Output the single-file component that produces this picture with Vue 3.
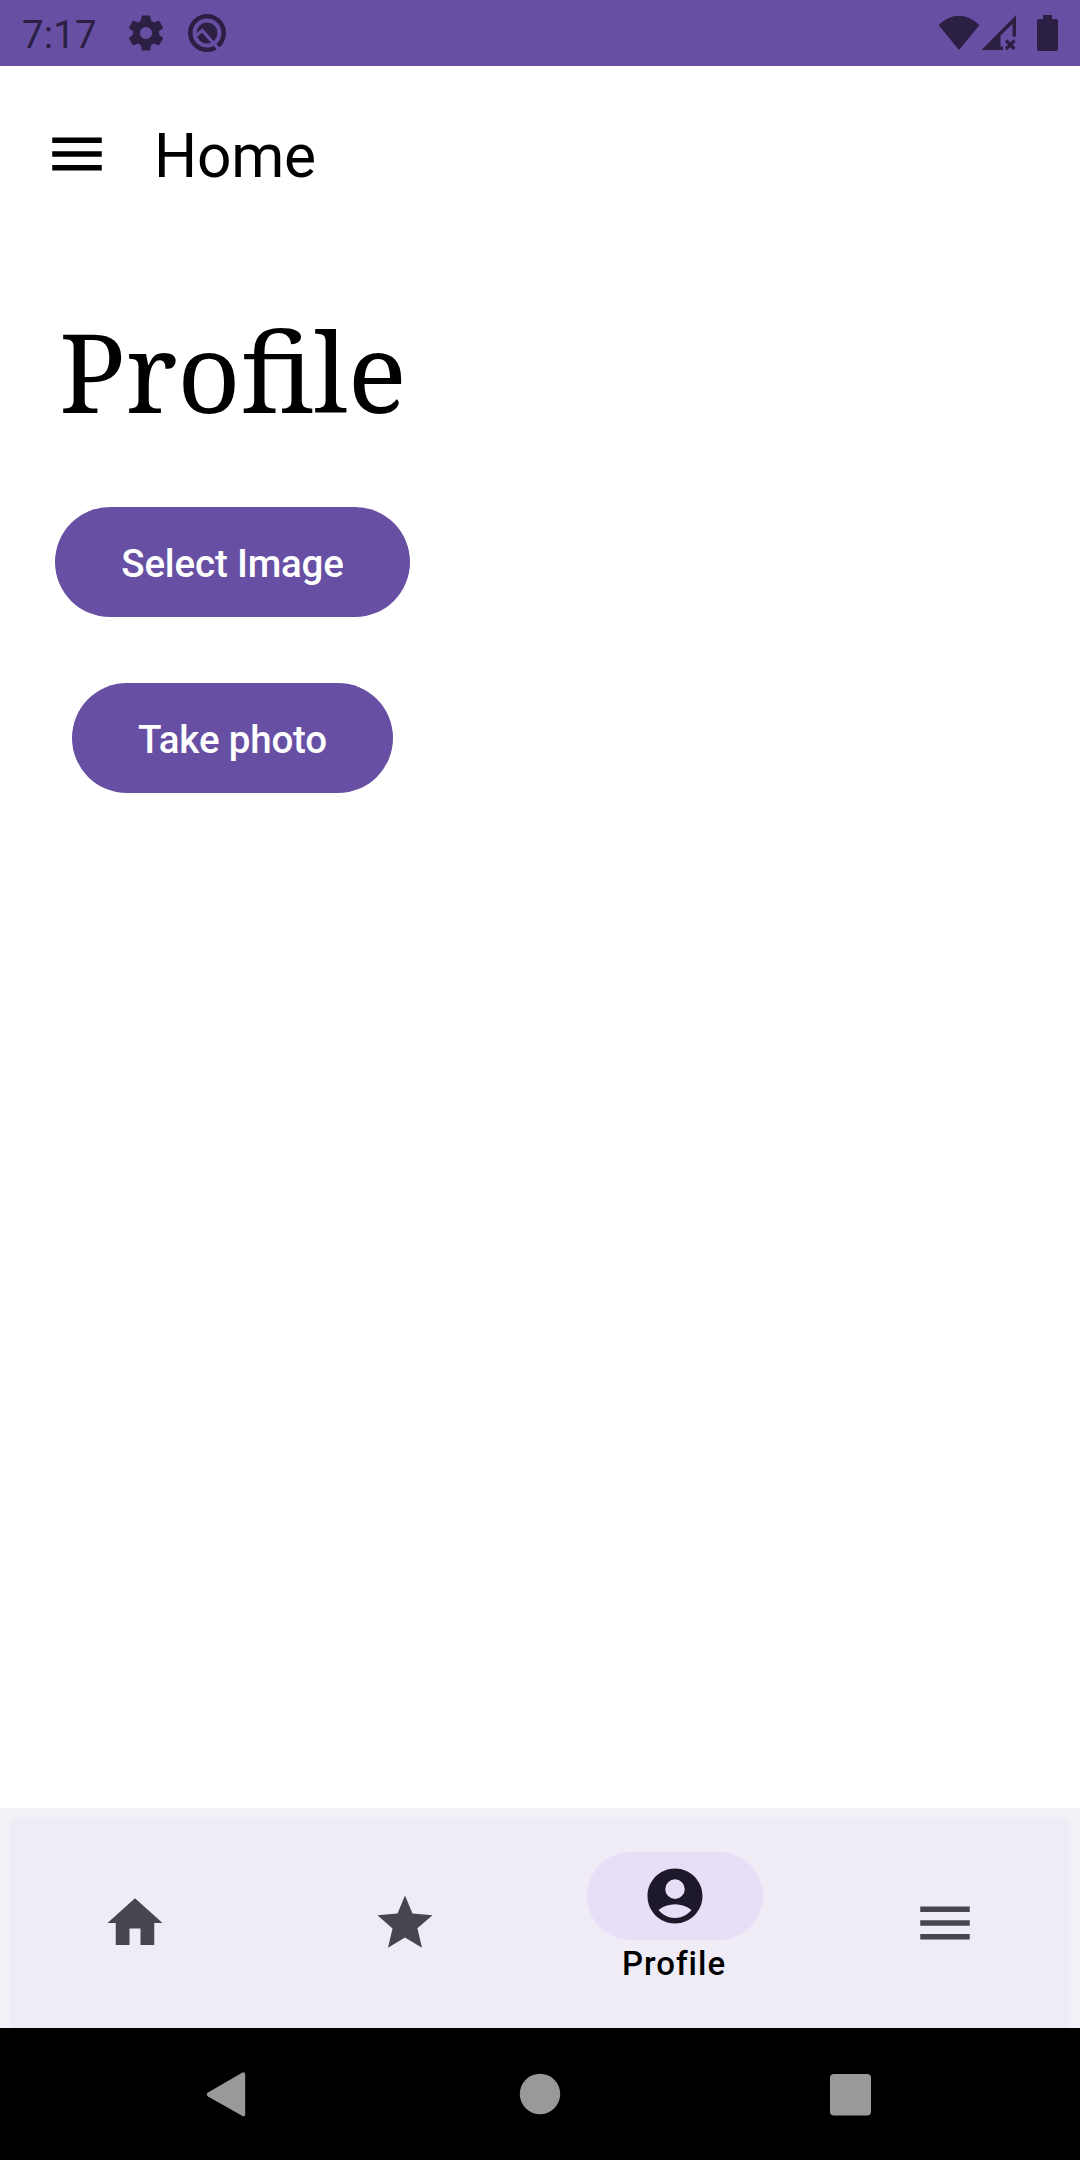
<script setup>
import { ref } from 'vue'

const active = ref('profile')
const menu = 'M3 18h18v-2H3v2zm0-5h18v-2H3v2zm0-7v2h18V6H3z'
const tabs = [
  { id: 'home', label: 'Home', path: 'M10 20v-6h4v6h5v-8h3L12 3 2 12h3v8z' },
  { id: 'star', label: 'Favorites', path: 'M12 2l2.720 6.500 7.280.650-5.500 4.800L18.180 21 12 17.270 5.820 21l1.640-7.030L2 9.150l7.280-.650z' },
  { id: 'profile', label: 'Profile', path: 'M12 2C6.48 2 2 6.48 2 12s4.48 10 10 10 10-4.48 10-10S17.52 2 12 2zM12 5.95a3.55 3.55 0 1 1 0 7.1 3.55 3.55 0 0 1 0-7.1zM12 20c-2.400 0-4.500-1.100-6-2.900 1.700-1.350 3.800-2.100 6-2.100s4.300.750 6 2.100C16.500 18.900 14.400 20 12 20z' },
  { id: 'menu', label: 'Menu', path: menu },
]
</script>

<template>
  <div class="screen">
    <header class="status">
      <span class="time">7:17</span>
      <svg class="gear" viewBox="0 0 24 24"><path fill-rule="evenodd" d="M19.430 12.980c.040-.320.070-.640.070-.980s-.030-.660-.070-.980l2.110-1.650c.190-.150.240-.420.120-.640l-2-3.460c-.120-.220-.390-.300-.610-.220l-2.490 1c-.520-.400-1.080-.730-1.690-.980l-.380-2.650C14.460 2.180 14.250 2 14 2h-4c-.250 0-.460.180-.490.420l-.380 2.650c-.610.250-1.170.590-1.690.980l-2.490-1c-.230-.090-.490 0-.610.220l-2 3.460c-.130.220-.070.490.120.640l2.110 1.650c-.040.320-.070.650-.070.980s.030.660.070.980l-2.110 1.650c-.190.150-.240.420-.120.640l2 3.460c.120.220.390.300.610.220l2.490-1c.520.400 1.080.730 1.690.980l.380 2.650c.030.240.240.420.490.420h4c.250 0 .460-.180.490-.420l.380-2.650c.610-.250 1.170-.590 1.690-.980l2.490 1c.230.090.490 0 .610-.220l2-3.460c.120-.220.070-.490-.120-.640zM12 15.500a3.500 3.500 0 1 1 0-7 3.500 3.500 0 0 1 0 7z" /></svg>
      <svg class="badge" viewBox="0 0 40 40">
        <circle cx="20" cy="20" r="16.700" fill="none" stroke="#2b2044" stroke-width="4.600" />
        <circle cx="20" cy="20" r="10.500" />
        <path d="M8 23.500L15.300 17.500L32 36.500" fill="none" stroke="#6750a4" stroke-width="3.200" />
      </svg>
      <div class="system">
        <svg class="wifi" viewBox="0 0 42 36"><path d="M.500 10Q20.800-8.500 41.500 10L21 35z" /></svg>
        <svg class="signal" viewBox="0 0 36 36">
          <path fill-rule="evenodd" d="M35 0V21.500H31.500V9L19.500 20.500V31.500H22V35H.500z" />
          <path d="M25 25.500L33.500 34M33.500 25.500L25 34" fill="none" stroke="#2b2044" stroke-width="3.200" />
        </svg>
        <svg class="battery" viewBox="0 0 21 36"><path d="M6 0H15V4H19Q21 4 21 6V34Q21 36 19 36H2Q0 36 0 34V6Q0 4 2 4H6z" /></svg>
      </div>
    </header>

    <div class="appbar">
      <svg class="icon" viewBox="0 0 24 24"><path :d="menu" /></svg>
      <span class="title">Home</span>
    </div>

    <main class="content">
      <h1>Profile</h1>
      <div class="actions">
        <button>Select Image</button>
        <button>Take photo</button>
      </div>
    </main>

    <nav class="tabs">
      <div class="tabs-inner">
        <div v-for="t in tabs" :key="t.id" class="tab" :class="{ active: active === t.id }" @click="active = t.id">
          <div class="pill">
            <svg class="icon" viewBox="0 0 24 24"><path fill-rule="evenodd" :d="t.path" /></svg>
          </div>
          <span v-if="active === t.id" class="label">{{ t.label }}</span>
        </div>
      </div>
    </nav>

    <footer class="sysnav">
      <svg viewBox="0 0 48 48"><path d="M40.200 4.500V45Q39.500 47 37.500 46L3 26.500Q.500 24.500 3 22.500L37.500 2.500Q39.500 1.800 40.200 4.500z" /></svg>
      <svg viewBox="0 0 48 48"><circle cx="24" cy="24" r="20.200" /></svg>
      <svg viewBox="0 0 48 48"><rect x="4" y="4" width="41" height="41.500" rx="4" /></svg>
    </footer>
  </div>
</template>

<style>
body { margin: 0; }
</style>

<style scoped>
.screen {
  width: 1080px;
  height: 2160px;
  display: flex;
  flex-direction: column;
  background: #fff;
  color: #000;
  font-family: Roboto, "Liberation Sans", sans-serif;
  overflow: hidden;
}
svg { display: block; flex: none; }
.status {
  box-sizing: border-box;
  height: 66px;
  flex: none;
  display: flex;
  align-items: center;
  background: #6750a4;
  color: #2b2044;
  fill: #2b2044;
  padding: 0 22px;
}
.time { font-size: 38.5px; line-height: 46px; width: 104px; margin-top: 3px; letter-spacing: 0.1px; }
.gear { width: 42px; height: 42px; margin-left: -1px; }
.badge { width: 40px; height: 40px; margin-left: 20px; }
.system { display: flex; margin-left: auto; }
.wifi { width: 42px; height: 36px; }
.signal { width: 36px; height: 36px; margin-left: 1px; }
.battery { width: 21px; height: 36px; margin-left: 20px; }
.icon { width: 66px; height: 66px; }
.appbar {
  height: 176px;
  flex: none;
  display: flex;
  align-items: center;
  padding-left: 44px;
}
.title { font-size: 60.5px; line-height: 77px; margin-left: 44px; margin-top: 4px; letter-spacing: -0.2px; }
.content {
  flex: 1;
  padding: 53px 55px 0;
}
h1 {
  margin: 0;
  font-family: "Noto Serif", "Droid Serif", "DejaVu Serif", serif;
  font-weight: 400;
  font-size: 110px;
  line-height: 150px;
  letter-spacing: 0;
  padding-left: 4px;
}
.actions {
  display: flex;
  flex-direction: column;
  align-items: center;
  width: 355px;
  margin-top: 62px;
  gap: 66px;
}
button {
  height: 110px;
  padding: 2px 66px 0;
  border: 0;
  border-radius: 55px;
  background: #6750a4;
  color: #fff;
  font: 500 38.5px/55px Roboto, "Liberation Sans", sans-serif;
  letter-spacing: -0.17px;
  white-space: nowrap;
}
.tabs {
  box-sizing: border-box;
  height: 220px;
  flex: none;
  background: #f2f1f7;
  padding: 11px 11px 0;
}
.tabs-inner {
  height: 209px;
  display: flex;
  background: #efecf6;
  box-shadow: inset 3px 3px 4px #eeecf3;
}
.tab {
  flex: 1;
  display: flex;
  flex-direction: column;
  align-items: center;
  justify-content: center;
  fill: #49454f;
}
.tab:first-child { margin-left: -11px; }
.tab:last-child { margin-right: -11px; }
.pill {
  width: 176px;
  height: 88px;
  border-radius: 44px;
  display: flex;
  align-items: center;
  justify-content: center;
  margin-bottom: 1px;
}
.active { justify-content: flex-start; fill: #1d192b; }
.active .pill { background: #e8def8; margin: 33px 0 0; }
.label {
  font-weight: 500;
  font-size: 33px;
  line-height: 44px;
  letter-spacing: 1px;
  margin-top: 2px;
  margin-right: 2px;
}
.sysnav {
  box-sizing: border-box;
  height: 132px;
  flex: none;
  display: flex;
  justify-content: space-between;
  padding: 42px 206px 0 205px;
  background: #000;
  fill: #999;
}
.sysnav svg { width: 48px; height: 48px; }
</style>
